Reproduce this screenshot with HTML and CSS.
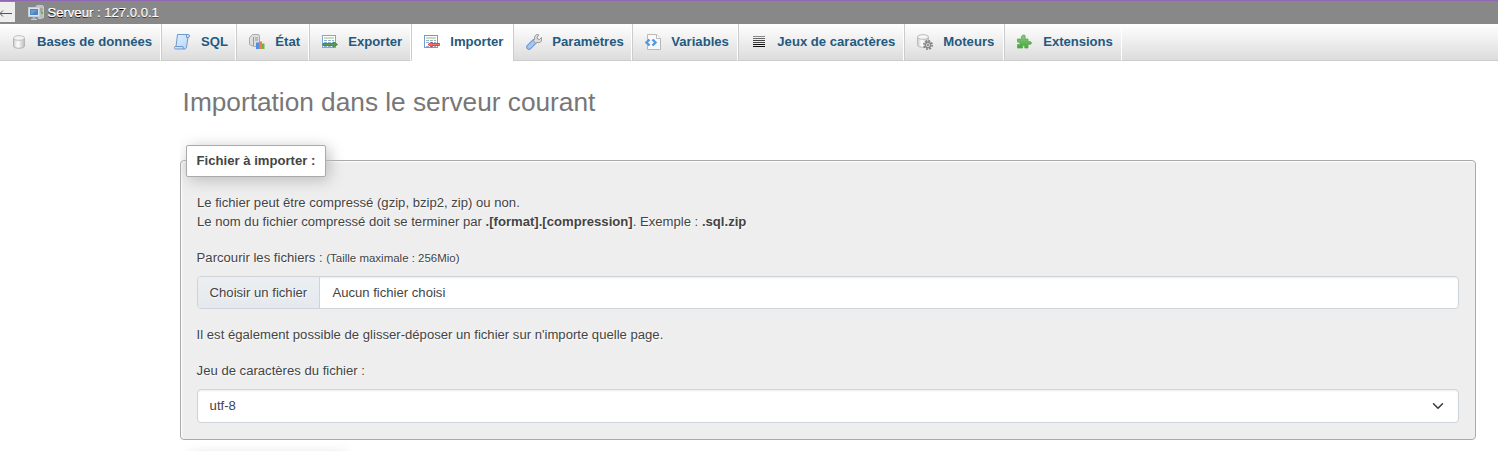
FILE: index.html
```html
<!DOCTYPE html>
<html lang="fr">
<head>
<meta charset="utf-8">
<title>Importer</title>
<link rel="stylesheet" href="styles.css">
</head>
<body>
<svg width="0" height="0" class="defs">
  <defs>
    <linearGradient id="grey"><stop offset="0" stop-color="#ccc"/><stop offset=".4" stop-color="#fff"/><stop offset="1" stop-color="#bbb"/></linearGradient>
    <linearGradient id="blue" x2="1" y2="1"><stop offset="0" stop-color="#e6f1ff"/><stop offset="1" stop-color="#b4d3f8"/></linearGradient>
    <linearGradient id="green" x2="0" y2="1"><stop offset="0" stop-color="#8ecb84"/><stop offset="1" stop-color="#46a53c"/></linearGradient>
  </defs>
</svg>
<header class="server">
  <span class="back"><svg width="15" height="20"><path d="M0 11.500H12M0 11.500l3-3M0 11.500l3 3" fill="none" stroke="#555"/></svg></span>
  <svg class="host" width="16" height="16"><path d="M7.500 2.500l1.500-2h5.500l1 1v11l-2 1h-3z" fill="#b9bfbc" stroke="#d2d4d3" stroke-width=".8"/><path d="M11.500 4h3M11.500 6h3" stroke="#888"/><path d="M13 7h2v2h-2z" fill="#63b54e"/><rect x=".5" y="2.500" width="11" height="9" fill="#dce3ea" stroke="#c6cbd0"/><rect x="2" y="4" width="8" height="6" fill="#4f84c4"/><path d="M3 5h6L4 9H3z" fill="#6c9cd6"/><path d="M4.500 12h3v2h-3z" fill="#8fb4e0"/><path d="M3 14.500h6" stroke="#bcd0e8"/></svg>
  <span class="server-name">Serveur : 127.0.0.1</span>
</header>
<nav class="tabs">
  <a class="tab databases"><svg width="16" height="16"><path d="M2.500 4v8c0 3 11 3 11 0V4" fill="url(#grey)" stroke="#b5b5b5"/><ellipse cx="8" cy="4" rx="5.500" ry="2.300" fill="#f4f4f4" stroke="#c0c0c0"/></svg>Bases de données</a>
  <a class="tab sql"><svg width="16" height="16"><path d="M3.500.5h10.500q1.500 0 1.500 1.500t-1.500 1.500l-1.500 9.500q-.3 2-2 2H1.500Q.5 15 .5 13.500t1.500-1z" fill="url(#blue)" stroke="#6c9ad0"/><path d="M2 12.500h7q.2 2.500 1.500 2.500M14 3.500h-1.500V1" fill="none" stroke="#6c9ad0"/></svg>SQL</a>
  <a class="tab status"><svg width="16" height="16"><path d="M.5 3.500L3.500.5H9q1.500 0 1.500 2v10h-6l-4-2z" fill="#ddd" stroke="#aaa"/><path d="M4.500 3v9M6 4h3M6 6h3" stroke="#999"/><path d="M7 8.500h3V15H7z" fill="#4d92e2"/><path d="M10 7.500h3V15h-3z" fill="#f27858"/><path d="M13 9.500h2.500V15H13z" fill="#72b444"/></svg>État</a>
  <a class="tab export"><svg width="16" height="16"><rect x=".5" y="1.500" width="13" height="12" fill="#fff" stroke="#7da6d7"/><path d="M2 4h10" stroke="#8abf70"/><path d="M2 6.500h10M2 8.500h10M2 12.500h10" stroke="#93afd1" stroke-dasharray="3 1"/><path d="M1 9.500h10.500V8l4 2.500-4 2.500v-1.500H1z" fill="#5aa04d" stroke="#2f7a29" stroke-width=".8"/></svg>Exporter</a>
  <a class="tab import active"><svg width="16" height="16"><rect x=".5" y="1.500" width="13" height="12" fill="#fff" stroke="#6f9dd2"/><path d="M2 4h10" stroke="#8abf70"/><path d="M2 6.500h10M2 8.500h10M2 12.500h10" stroke="#93afd1" stroke-dasharray="3 1"/><path d="M15.500 9.500H8V8l-4 2.500 4 2.500v-1.500h7.500z" fill="#ff6f66" stroke="#e02a2a" stroke-width=".8"/></svg>Importer</a>
  <a class="tab settings"><svg width="16" height="16"><path d="M3 13l5-5" stroke="#6591d0" stroke-width="5.500" stroke-linecap="round"/><path d="M3 13l5-5" stroke="#a6c5f0" stroke-width="3.700" stroke-linecap="round"/><path d="M7.500 6.500l1-1.500q-.5-3 2-4.500l2.500.5-2 2 .5 2 2 .5 2-2q1 3-1 4.500-1.500 1-3.500.5l-1.500 1z" fill="#ddd" stroke="#8d8d8d" stroke-width=".9"/></svg>Paramètres</a>
  <a class="tab variables"><svg width="16" height="16"><path d="M2.500.5h9l4 4v11h-13z" fill="#f8f8f8" stroke="#b9b9b9"/><path d="M11.500.5v4h4" fill="#fff" stroke="#b9b9b9"/><path d="M4.500 5.500l-3 3 3 3M7.500 5.500l3 3-3 3" fill="none" stroke="#4d99e6" stroke-width="2.400"/></svg>Variables</a>
  <a class="tab charsets"><svg width="16" height="16"><path d="M2 2.500h12" stroke="#888"/><path d="M2 4.500h12" stroke="#666"/><path d="M2 6.500h12M2 8.500h12" stroke="#444"/><path d="M2 10.500h12M2 12.500h12" stroke="#111"/></svg>Jeux de caractères</a>
  <a class="tab engines"><svg width="16" height="16"><path d="M.5 3v8c0 3 11 3 11 0V3" fill="url(#grey)" stroke="#bbb"/><ellipse cx="6" cy="3" rx="5.500" ry="2.300" fill="#f6f6f6" stroke="#bbb"/><circle cx="11" cy="11" r="4.200" fill="none" stroke="#777" stroke-width="1.500" stroke-dasharray="1.700 1.600"/><circle cx="11" cy="11" r="2.700" fill="#ddd" stroke="#888" stroke-width="1.400"/><circle cx="11" cy="11" r="1" fill="#777"/></svg>Moteurs</a>
  <a class="tab plugins"><svg width="16" height="16"><path d="M.5 5h4.500q-1.500-3 .8-4 2.700-.5 2.500 2l-.5 2h3.200v3q3-1.500 3.500.8 0 2.500-3.500 1.200v4H7.700q.8-2.500-1-2.500t-1 2.500H.5V10.500q2.500.5 2.500-1T.5 8z" fill="url(#green)" stroke="#5aa84e" stroke-width=".8"/></svg>Extensions</a>
</nav>
<main class="page">
  <h2 class="title">Importation dans le serveur courant</h2>
  <section class="fieldset">
    <div class="legend">Fichier à importer :</div>
    <p class="intro">Le fichier peut être compressé (gzip, bzip2, zip) ou non.<br>Le nom du fichier compressé doit se terminer par <b>.[format].[compression]</b>. Exemple : <b>.sql.zip</b></p>
    <div class="label">Parcourir les fichiers : <small>(Taille maximale : 256Mio)</small></div>
    <div class="control file"><span class="choose">Choisir un fichier</span><span class="chosen">Aucun fichier choisi</span></div>
    <p class="hint">Il est également possible de glisser-déposer un fichier sur n'importe quelle page.</p>
    <div class="label">Jeu de caractères du fichier :</div>
    <div class="control select"><span>utf-8</span><svg width="12" height="12" viewBox="0 0 16 16"><path d="M2 5l6 6 6-6" fill="none" stroke="#343a40" stroke-width="2" stroke-linecap="round" stroke-linejoin="round"/></svg></div>
  </section>
  <div class="next-legend"></div>
</main>
</body>
</html>
```
FILE: styles.css
```css
* { box-sizing: border-box; }
html { overflow: hidden; }
body {
  margin: 0;
  height: 451px;
  overflow: hidden;
  background: #fff;
  color: #444;
  font: 13.12px/19.68px "Liberation Sans", Arial, sans-serif;
}
.defs { position: absolute; }
.server {
  display: flex;
  height: 24px;
  border-top: 1px solid #9068b5;
  background: #888;
  color: #fff;
  text-shadow: 0 1px 0 #000;
}
.back { width: 15px; height: 20px; margin-top: 1px; background: #eee; }
.back svg { display: block; }
.host { margin: 4px 4px 0 13px; }
.server-name {
  margin: 2px 0 0 -.6px;
  white-space: pre;
  -webkit-text-stroke: .25px #fff;
}
.tabs {
  display: flex;
  height: 37px;
  border-bottom: 1px solid #ccc;
  background: linear-gradient(#fff, #dcdcdc);
}
.tab {
  display: flex;
  gap: 10px;
  height: 37px;
  padding: 8px 0 0 12px;
  border-left: 1px solid #ccc;
  border-right: 1px solid #fff;
  border-bottom: 1px solid #ccc;
  color: #235a81;
  font-weight: bold;
  white-space: nowrap;
}
.tab svg { flex: none; margin: 2px .3px 0 0; }
.databases { width: 161px; padding-left: 11px; border-left: 0; }
.databases svg { margin-right: 0; }
.sql { width: 75px; }
.sql svg { margin-right: 1px; }
.status { width: 73px; }
.export { width: 102px; }
.import { width: 102px; }
.settings { width: 119px; }
.variables { width: 106px; }
.charsets { width: 166px; }
.engines { width: 100px; }
.plugins { width: 118px; letter-spacing: -.05px; }
.active { background: #fff; border-bottom-color: #fff; }
.page { margin-left: 180px; width: 1296px; height: 390px; padding-top: 24px; overflow: hidden; }
.title {
  margin: 0 0 0 2.6px;
  color: #777;
  font-size: 26.24px;
  font-weight: normal;
  line-height: 34px;
}
.fieldset {
  height: 280px;
  margin-top: 41px;
  padding: 0 16px;
  border: 1px solid #aaa;
  border-radius: 4px;
  background: #eee;
  text-shadow: 1px 1px 2px #fff;
  box-shadow: inset 1px 1px 2px #fff;
}
.legend {
  width: 140px;
  height: 32px;
  margin: -16px 0 0 5px;
  padding: 5px 9.6px;
  border: 1px solid #aaa;
  border-radius: 2px;
  background: #fff;
  box-shadow: 3px 3px 15px #bbb;
  font-weight: bold;
  white-space: nowrap;
}
.fieldset > .legend { margin-left: -11px; }
.intro { height: 39px; margin: 16px 0; line-height: 19px; }
.label { height: 19px; margin-left: -.4px; }
.label small { font-size: 11.48px; }
.control {
  display: flex;
  align-items: center;
  border: 1px solid #ced4da;
  border-radius: 4px;
  background: #fff;
  box-shadow: inset 0 1px 2px rgba(0, 0, 0, .075);
}
.file { height: 33px; margin-top: 9px; overflow: hidden; }
.choose {
  width: 122px;
  height: 31px;
  padding: 6px 11.6px;
  border-right: 1px solid #ced4da;
  background: linear-gradient(#eceff2, #e5e9ed);
  white-space: nowrap;
}
.chosen { padding-left: 12.4px; }
.hint { height: 20px; margin: 16px 0 16px -.4px; }
.select { height: 34px; margin-top: 9px; padding: 0 14px 1px 11.6px; justify-content: space-between; }
.next-legend {
  width: 157px;
  height: 20px;
  margin: 18px 0 0 10px;
  box-shadow: 0 0 15px #bbb;
}
```
